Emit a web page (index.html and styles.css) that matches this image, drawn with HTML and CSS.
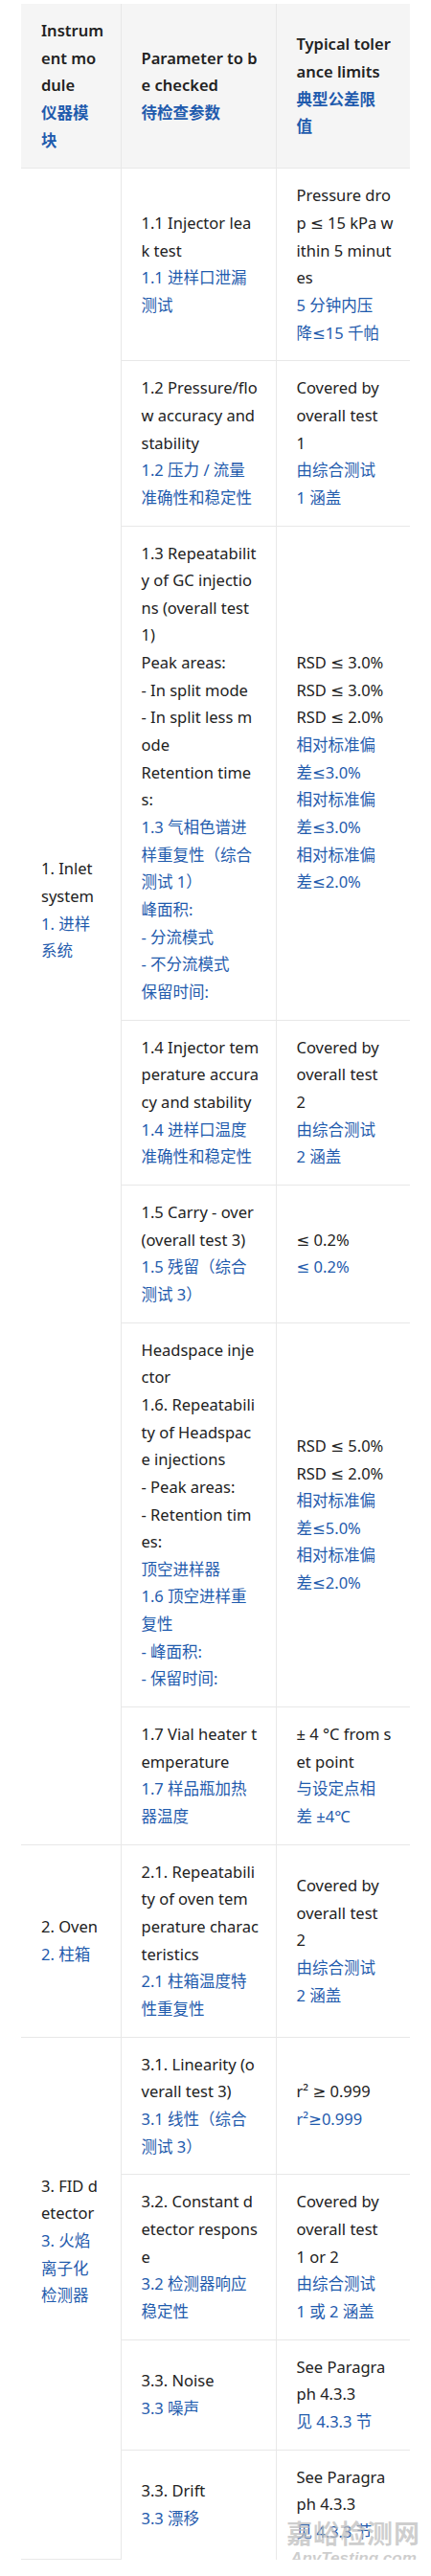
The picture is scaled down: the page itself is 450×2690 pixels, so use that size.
FILE: index.html
```html
<!DOCTYPE html>
<html lang="zh-CN">
<head>
    <meta charset="UTF-8">
    <meta name="viewport" content="width=device-width, initial-scale=1.0">
    <title>气相色谱仪性能检查</title>
    <link rel="stylesheet" href="styles.css">
</head>
<body>

    <!-- Tabela de verificação do GC -->
    <table class="check-table">
        <colgroup>
            <col class="col-module">
            <col class="col-param">
            <col class="col-limit">
        </colgroup>
        <thead>
            <tr>
                <th>
                    <p>Instrum<br>ent mo<br>dule</p>
                    <p class="cn">仪器模<br>块</p>
                </th>
                <th>
                    <p>Parameter to b<br>e checked</p>
                    <p class="cn">待检查参数</p>
                </th>
                <th>
                    <p>Typical toler<br>ance limits</p>
                    <p class="cn">典型公差限<br>值</p>
                </th>
            </tr>
        </thead>
        <tbody>
            <!-- 1. Inlet system -->
            <tr>
                <td rowspan="7" class="group group-inlet">
                    <p>1. Inlet<br>system</p>
                    <p class="cn">1. 进样<br>系统</p>
                </td>
                <td>
                    <p>1.1 Injector lea<br>k test</p>
                    <p class="cn">1.1 进样口泄漏<br>测试</p>
                </td>
                <td>
                    <p>Pressure dro<br>p ≤ 15 kPa w<br>ithin 5 minut<br>es</p>
                    <p class="cn">5 分钟内压<br>降≤15 千帕</p>
                </td>
            </tr>
            <tr>
                <td>
                    <p>1.2 Pressure/flo<br>w accuracy and<br>stability</p>
                    <p class="cn">1.2 压力 / 流量<br>准确性和稳定性</p>
                </td>
                <td>
                    <p>Covered by<br>overall test<br>1</p>
                    <p class="cn">由综合测试<br>1 涵盖</p>
                </td>
            </tr>
            <tr>
                <td>
                    <p>1.3 Repeatabilit<br>y of GC injectio<br>ns (overall test<br>1)</p>
                    <p>Peak areas:</p>
                    <p>- In split mode</p>
                    <p>- In split less m<br>ode</p>
                    <p>Retention time<br>s:</p>
                    <p class="cn">1.3 气相色谱进<br>样重复性（综合<br>测试 1）</p>
                    <p class="cn">峰面积:</p>
                    <p class="cn">- 分流模式</p>
                    <p class="cn">- 不分流模式</p>
                    <p class="cn">保留时间:</p>
                </td>
                <td>
                    <p>RSD ≤ 3.0%</p>
                    <p>RSD ≤ 3.0%</p>
                    <p>RSD ≤ 2.0%</p>
                    <p class="cn">相对标准偏<br>差≤3.0%</p>
                    <p class="cn">相对标准偏<br>差≤3.0%</p>
                    <p class="cn">相对标准偏<br>差≤2.0%</p>
                </td>
            </tr>
            <tr>
                <td>
                    <p>1.4 Injector tem<br>perature accura<br>cy and stability</p>
                    <p class="cn">1.4 进样口温度<br>准确性和稳定性</p>
                </td>
                <td>
                    <p>Covered by<br>overall test<br>2</p>
                    <p class="cn">由综合测试<br>2 涵盖</p>
                </td>
            </tr>
            <tr>
                <td>
                    <p>1.5 Carry - over<br>(overall test 3)</p>
                    <p class="cn">1.5 残留（综合<br>测试 3）</p>
                </td>
                <td>
                    <p>≤ 0.2%</p>
                    <p class="cn">≤ 0.2%</p>
                </td>
            </tr>
            <tr>
                <td>
                    <p>Headspace inje<br>ctor</p>
                    <p>1.6. Repeatabili<br>ty of Headspac<br>e injections</p>
                    <p>- Peak areas:</p>
                    <p>- Retention tim<br>es:</p>
                    <p class="cn">顶空进样器</p>
                    <p class="cn">1.6 顶空进样重<br>复性</p>
                    <p class="cn">- 峰面积:</p>
                    <p class="cn">- 保留时间:</p>
                </td>
                <td>
                    <p>RSD ≤ 5.0%</p>
                    <p>RSD ≤ 2.0%</p>
                    <p class="cn">相对标准偏<br>差≤5.0%</p>
                    <p class="cn">相对标准偏<br>差≤2.0%</p>
                </td>
            </tr>
            <tr>
                <td>
                    <p>1.7 Vial heater t<br>emperature</p>
                    <p class="cn">1.7 样品瓶加热<br>器温度</p>
                </td>
                <td>
                    <p>± 4 °C from s<br>et point</p>
                    <p class="cn">与设定点相<br>差 ±4℃</p>
                </td>
            </tr>

            <!-- 2. Oven -->
            <tr>
                <td class="group">
                    <p>2. Oven</p>
                    <p class="cn">2. 柱箱</p>
                </td>
                <td>
                    <p>2.1. Repeatabili<br>ty of oven tem<br>perature charac<br>teristics</p>
                    <p class="cn">2.1 柱箱温度特<br>性重复性</p>
                </td>
                <td>
                    <p>Covered by<br>overall test<br>2</p>
                    <p class="cn">由综合测试<br>2 涵盖</p>
                </td>
            </tr>

            <!-- 3. FID detector -->
            <tr>
                <td rowspan="4" class="group group-fid">
                    <p>3. FID d<br>etector</p>
                    <p class="cn">3. 火焰<br>离子化<br>检测器</p>
                </td>
                <td>
                    <p>3.1. Linearity (o<br>verall test 3)</p>
                    <p class="cn">3.1 线性（综合<br>测试 3）</p>
                </td>
                <td>
                    <p>r² ≥ 0.999</p>
                    <p class="cn">r²≥0.999</p>
                </td>
            </tr>
            <tr>
                <td>
                    <p>3.2. Constant d<br>etector respons<br>e</p>
                    <p class="cn">3.2 检测器响应<br>稳定性</p>
                </td>
                <td>
                    <p>Covered by<br>overall test<br>1 or 2</p>
                    <p class="cn">由综合测试<br>1 或 2 涵盖</p>
                </td>
            </tr>
            <tr>
                <td>
                    <p>3.3. Noise</p>
                    <p class="cn">3.3 噪声</p>
                </td>
                <td>
                    <p>See Paragra<br>ph 4.3.3</p>
                    <p class="cn">见 4.3.3 节</p>
                </td>
            </tr>
            <tr class="last">
                <td>
                    <p>3.3. Drift</p>
                    <p class="cn">3.3 漂移</p>
                </td>
                <td>
                    <p>See Paragra<br>ph 4.3.3</p>
                    <p class="cn">见 4.3.3 节</p>
                </td>
            </tr>
        </tbody>
    </table>

    <!-- Marca d'água -->
    <div class="watermark">
        <span class="wm-cn">嘉峪检测网</span>
        <span class="wm-en">AnyTesting.com</span>
    </div>

</body>
</html>
```

FILE: styles.css
```css
/* Reset básico */
* {
    box-sizing: border-box;
    margin: 0;
    padding: 0;
}

body {
    position: relative;
    padding: 4px 22px 0;
    background-color: #fff;
    color: #222;
    font-family: "Noto Sans", "DejaVu Sans", "Noto Sans CJK SC", sans-serif;
    font-size: 16.5px;
    line-height: 28.65px;
}

/* Tabela */
.check-table {
    width: 406px;
    border-collapse: collapse;
    table-layout: fixed;
}

.col-module {
    width: 104px;
}

.col-param {
    width: 162px;
}

.col-limit {
    width: 140px;
}

.check-table th,
.check-table td {
    padding: 14px 21px;
    text-align: left;
    vertical-align: middle;
    white-space: nowrap;
    border-right: 1px solid #e8e8e8;
    border-bottom: 1px solid #e8e8e8;
}

.check-table th:last-child,
.check-table td:last-child {
    border-right: none;
}

.check-table tr.last td {
    border-bottom: none;
}

.check-table thead th {
    background-color: #f5f5f5;
    font-weight: 600;
}

/* O texto dos grupos fica acima do centro, como no original */
.check-table td.group-inlet {
    padding-bottom: 215px;
}

.check-table td.group-fid {
    padding-bottom: 133px;
}

/* Texto em chinês */
.cn {
    color: #1f5bad;
}

/* Marca d'água no canto */
.watermark {
    position: absolute;
    top: 2632px;
    left: 299px;
    display: flex;
    flex-direction: column;
    align-items: center;
    color: rgba(190, 190, 190, 0.75);
    font-weight: bold;
    line-height: 1;
}

.wm-cn {
    font-size: 27px;
    letter-spacing: 1px;
}

.wm-en {
    margin-top: 4px;
    font-family: "Liberation Sans", sans-serif;
    font-size: 17px;
    font-style: italic;
}
```
